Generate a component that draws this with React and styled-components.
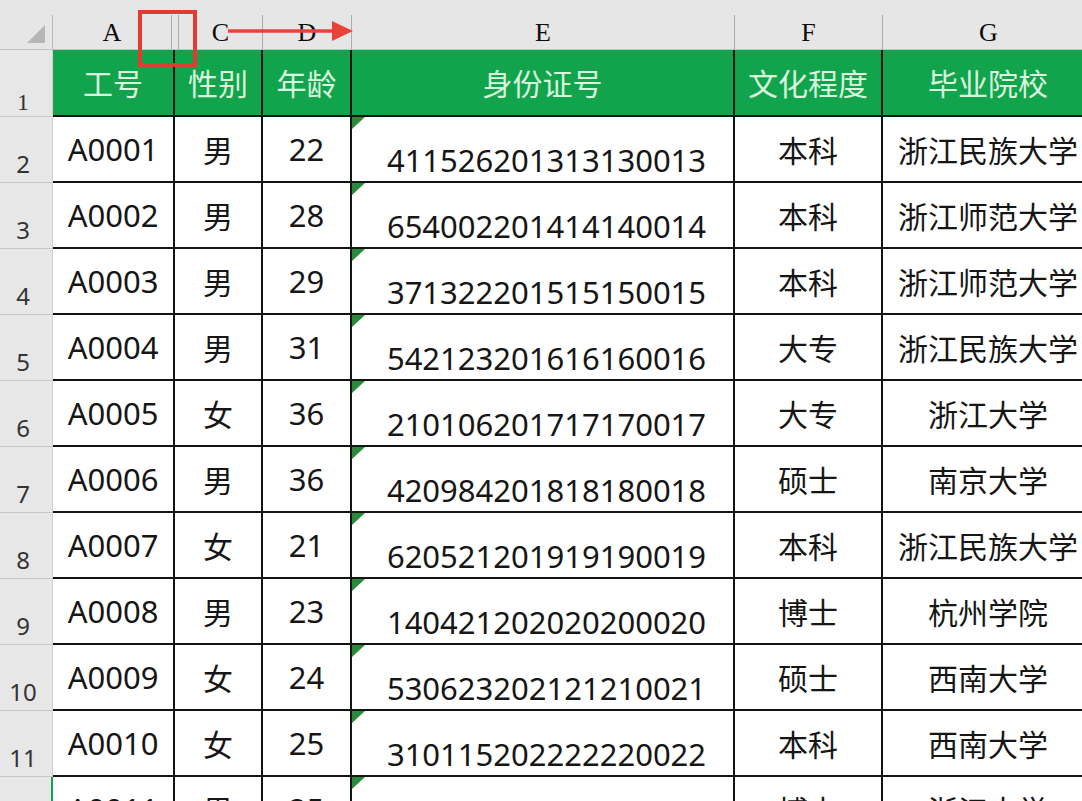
import React from "react";
import styled, { createGlobalStyle } from "styled-components";

const GlobalStyle = createGlobalStyle`
  html, body {
    margin: 0;
    padding: 0;
    background: #ffffff;
  }
  * {
    box-sizing: border-box;
  }
`;

const GREEN = "#12a44c";
const GRID = "#141414";

// column widths, row header first
const widths = [53, 122, 88, 89, 383, 148, 212];

const headings = ["工号", "性别", "年龄", "身份证号", "文化程度", "毕业院校"];

const rows = [
  ["A0001", "男", "22", "411526201313130013", "本科", "浙江民族大学"],
  ["A0002", "男", "28", "654002201414140014", "本科", "浙江师范大学"],
  ["A0003", "男", "29", "371322201515150015", "本科", "浙江师范大学"],
  ["A0004", "男", "31", "542123201616160016", "大专", "浙江民族大学"],
  ["A0005", "女", "36", "210106201717170017", "大专", "浙江大学"],
  ["A0006", "男", "36", "420984201818180018", "硕士", "南京大学"],
  ["A0007", "女", "21", "620521201919190019", "本科", "浙江民族大学"],
  ["A0008", "男", "23", "140421202020200020", "博士", "杭州学院"],
  ["A0009", "女", "24", "530623202121210021", "硕士", "西南大学"],
  ["A0010", "女", "25", "310115202222220022", "本科", "西南大学"],
  ["A0011", "男", "25", "330106202323230023", "博士", "浙江大学"],
];

const Page = styled.div`
  position: relative;
  width: 100vw;
  height: 100vh;
  overflow: hidden;
  background: #ffffff;
`;

const LetterStrip = styled.div`
  display: flex;
  width: 1095px;
  height: 50px;
  padding-top: 15px;
  background: #e6e6e6;
  border-bottom: 1px solid #c3c3c3;
`;

const Corner = styled.div`
  position: relative;
  width: 53px;
  flex: none;
  border-right: 1px solid #b9b9b9;
`;

const CornerTriangle = styled.div`
  position: absolute;
  right: 7px;
  bottom: 6px;
  width: 0;
  height: 0;
  border-left: 18px solid transparent;
  border-bottom: 18px solid #b6b6b6;
`;

const ColLabel = styled.div`
  width: ${(p) => p.$w}px;
  flex: none;
  display: flex;
  align-items: flex-end;
  justify-content: center;
  border-right: 1px solid #acacac;
  font-family: "Liberation Serif", serif;
  font-size: 26px;
  font-weight: 500;
  line-height: 1.2;
  color: #0c0c0c;
  padding-bottom: 1px;
`;

const Sheet = styled.div`
  display: grid;
  grid-template-columns: ${widths.map((w) => `${w}px`).join(" ")};
  grid-template-rows: 67px repeat(${rows.length}, 66px);
  width: 1095px;
`;

const RowNum = styled.div`
  display: flex;
  align-items: flex-end;
  justify-content: center;
  padding-right: 6px;
  padding-bottom: ${(p) => (p.$serif ? 0 : 2)}px;
  background: #e7e7e7;
  border-bottom: 1px solid #c6c6c6;
  border-right: ${(p) => (p.$active ? `2px solid ${GREEN}` : "1px solid #cfcfcf")};
  font-family: ${(p) => (p.$serif ? `"Liberation Serif", serif` : `"Noto Sans", sans-serif`)};
  font-size: 24px;
  color: #333;
`;

const HeadCell = styled.div`
  display: flex;
  align-items: center;
  justify-content: center;
  background: ${GREEN};
  border-right: 2px solid ${GRID};
  border-bottom: 2px solid ${GRID};
  font-family: "Noto Sans CJK SC", "Noto Sans", sans-serif;
  font-size: 30px;
  color: #d9f6de;
  padding-bottom: 2px;
`;

const Cell = styled.div`
  position: relative;
  display: flex;
  align-items: ${(p) => (p.$bottom ? "flex-end" : "center")};
  justify-content: center;
  background: #fff;
  border-right: 2px solid ${GRID};
  border-bottom: 2px solid ${GRID};
  font-family: "Noto Sans", "Noto Sans CJK SC", sans-serif;
  font-size: ${(p) => (p.$cjk ? 30 : 31)}px;
  color: #161616;
  white-space: nowrap;
  padding-left: ${(p) => (p.$bottom ? 8 : 0)}px;

  ${(p) =>
    p.$flag &&
    `
    &::before {
      content: "";
      position: absolute;
      top: 0;
      left: 0;
      width: 0;
      height: 0;
      border-top: 12px solid #2a8a3c;
      border-right: 13px solid transparent;
    }
  `}
`;

const Annotation = styled.svg`
  position: absolute;
  top: 0;
  left: 0;
  pointer-events: none;
`;

const cjk = /[\u4e00-\u9fff]/;

export default function App() {
  return (
    <Page>
      <GlobalStyle />
      <LetterStrip>
        <Corner>
          <CornerTriangle />
        </Corner>
        <ColLabel $w={119}>A</ColLabel>
        <ColLabel $w={7} />
        <ColLabel $w={84}>C</ColLabel>
        <ColLabel $w={89}>D</ColLabel>
        <ColLabel $w={383}>E</ColLabel>
        <ColLabel $w={148}>F</ColLabel>
        <ColLabel $w={212}>G</ColLabel>
      </LetterStrip>

      <Sheet>
        <RowNum $serif>1</RowNum>
        {headings.map((h) => (
          <HeadCell key={h}>{h}</HeadCell>
        ))}

        {rows.map((r, i) => (
          <React.Fragment key={r[0]}>
            <RowNum $active={i === rows.length - 1}>
              {i === rows.length - 1 ? "" : i + 2}
            </RowNum>
            {r.map((v, j) => (
              <Cell key={j} $bottom={j === 3} $flag={j === 3} $cjk={cjk.test(v)}>
                {v}
              </Cell>
            ))}
          </React.Fragment>
        ))}
      </Sheet>

      <Annotation width="400" height="80" viewBox="0 0 400 80">
        <rect x="140" y="12" width="55" height="53" fill="none" stroke="#e23b32" strokeWidth="4" />
        <line x1="228" y1="31" x2="336" y2="31" stroke="#e8433a" strokeWidth="3.5" />
        <polygon points="332,21 353,31 332,41" fill="#e8433a" />
      </Annotation>
    </Page>
  );
}
